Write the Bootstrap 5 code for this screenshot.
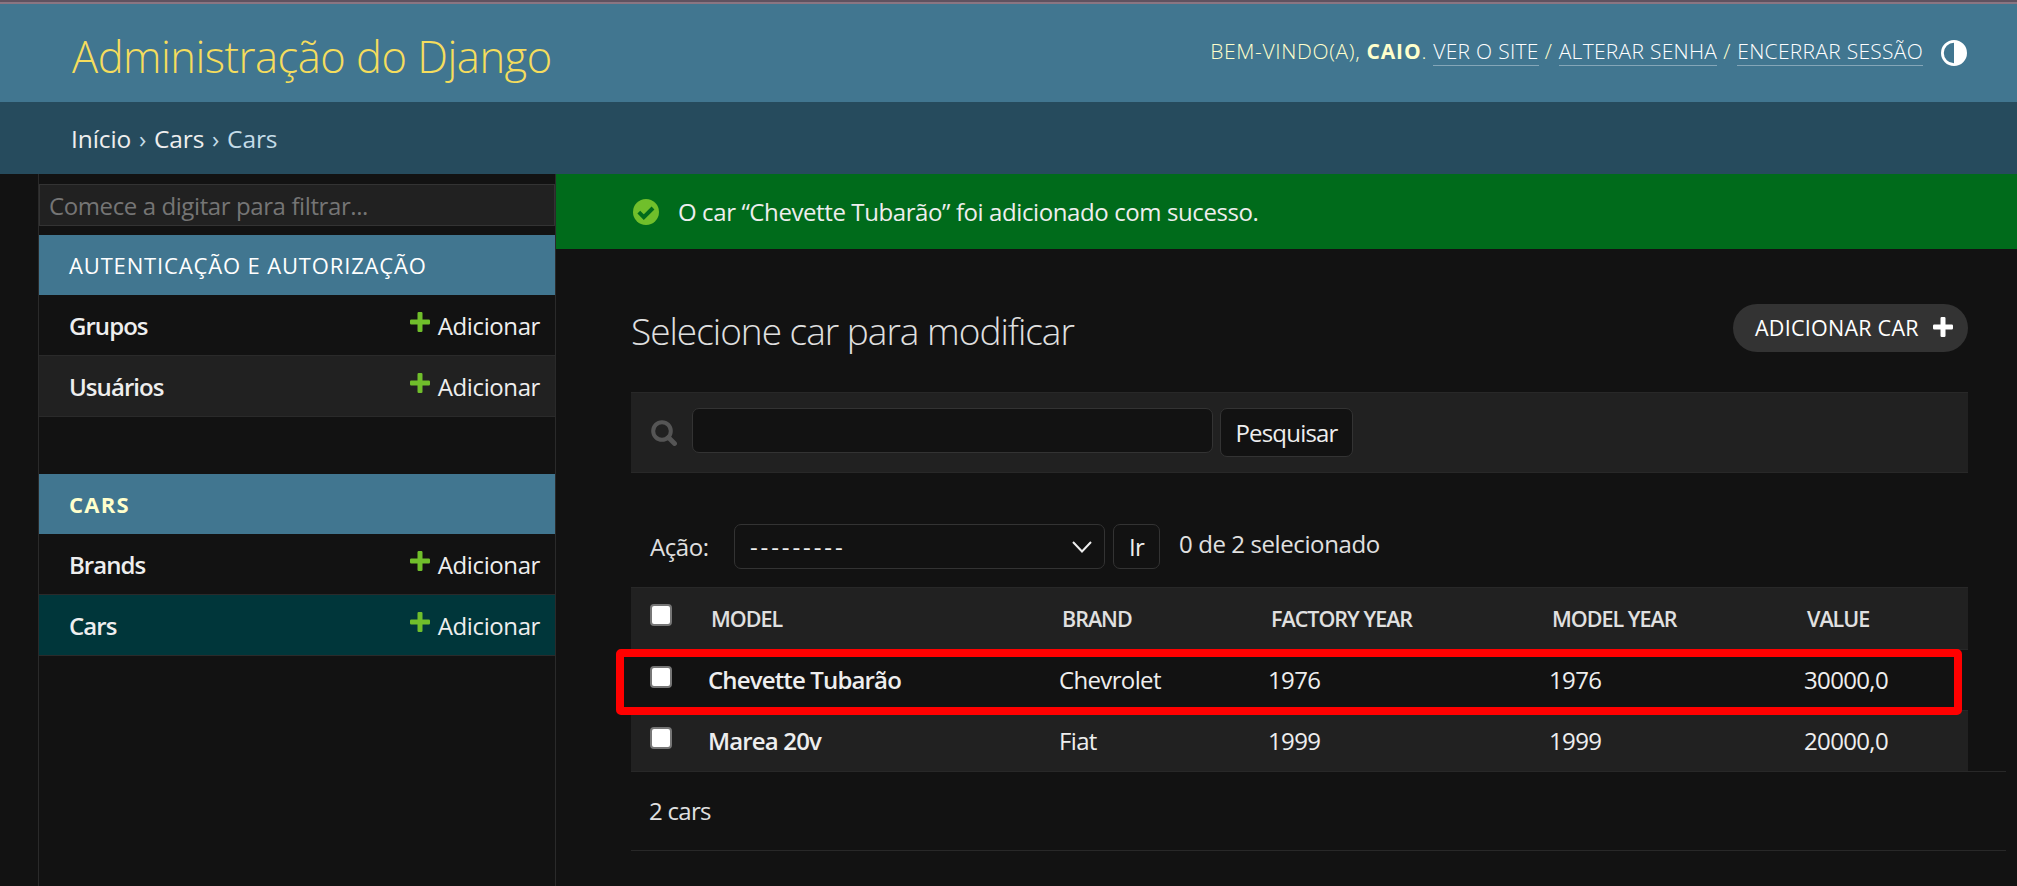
<!DOCTYPE html>
<html lang="pt-br">
<head>
<meta charset="utf-8">
<title>Selecione car para modificar | Administração do Django</title>
<link href="https://cdn.jsdelivr.net/npm/bootstrap@5.3.0/dist/css/bootstrap.min.css" rel="stylesheet">
<style>
html, body { height: 100%; overflow: hidden; }
body { font-family: "Open Sans", "Noto Sans", sans-serif; font-size: 24px; line-height: 32px; background: #121212; color: #e0e0e0; letter-spacing: -.4px; }
a { color: #eee; text-decoration: none; }
.top-edge { height: 4px; background: #5f5260; border-bottom: 2px solid #8a7582; }
.site-header { height: 98px; padding: 0 50px 0 71px; background: #417690; color: #ffc; }
.site-title { font-size: 43.5px; font-weight: 300; line-height: 60px; color: #f5dd5d; letter-spacing: -.5px; margin: 7px 0 0 1px; }
.user-tools { font-size: 21px; font-weight: 300; letter-spacing: .65px; line-height: 28px; }
.user-tools > div { margin-top: -3px; }
.user-tools strong { font-weight: 700; letter-spacing: .9px; }
.user-tools a { color: #fff; border-bottom: 1px solid #84a6b8; display: inline-block; line-height: 27px; letter-spacing: .28px; }
.user-tools svg { margin-left: 18px; }
.crumbs { height: 72px; padding: 2px 71px 0; background: #264b5d; color: #c4dce8; font-size: 24.5px; letter-spacing: -.1px; word-spacing: 1.5px; }
.side { width: 518px; margin-left: 38px; border: solid #2a2a2a; border-width: 0 1px; flex: none; }
.filter-box { height: 42px; margin: 10px 0 9px; padding: 0 9px; background: #212121; border: 1px solid #333; border-radius: 0; color: #eee; font-size: 24px; letter-spacing: -.4px; }
.filter-box::placeholder { color: #757575; opacity: 1; }
.app-caption { height: 60px; padding: 0 30px; background: #417690; color: #fff; font-size: 22px; letter-spacing: .85px; }
.app-caption.current { color: #ffc; font-weight: 700; letter-spacing: 1.3px; margin-top: 57px; }
.app-row { height: 61px; padding: 2px 15px 0 30px; border-bottom: 1px solid #2a2a2a; }
.app-row .name { font-weight: 600; letter-spacing: -.95px; }
.app-row svg { margin: -8px 8px 0 0; }
.app-row.odd { background: #212121; }
.app-row.active-row { background: #00363a; }
.success-note { height: 75px; padding: 0 75px 0 77px; background: #006b1b; color: #eee; }
.success-note svg { margin-right: 19px; }
.main-pad { padding: 0 11px 0 75px; }
.body-col { width: 1337px; }
.title-row { height: 143px; padding-top: 15px; }
.page-title { font-size: 37px; font-weight: 300; line-height: 50px; letter-spacing: -1px; margin: 6px 0 0; }
.add-pill { width: 235px; height: 48px; background: #333; border-radius: 27px; color: #fff; font-size: 21.5px; letter-spacing: .25px; padding: 0 15px 0 22px; }
.add-pill svg { margin-top: -2px; }
.search-bar { height: 81px; background: #212121; border: solid #282828; border-width: 1px 0; padding: 15px 20px; }
.dark-field { height: 45px; background: #121212; border: 1px solid #333; border-radius: 7px; color: #eee; }
.go-btn { height: 49px; background: #121212; border: 1px solid #333; border-radius: 7px; color: #eee; font-size: 24px; line-height: 32px; letter-spacing: -.8px; padding: 0; text-align: center; }
.mag { margin: 12px 15px 0 0; }
.query { width: 521px; }
.find { width: 133px; margin-left: 7px; }
.actions-bar { height: 45px; margin-top: 51px; padding-left: 19px; }
.action-label { width: 84px; padding-top: 7px; }
.pick { width: 371px; padding: 0 12px 0 15px; }
.pick span { letter-spacing: 2.9px; }
.go { width: 47px; height: 45px; margin-left: 8px; padding-top: 1px; }
.counter { margin-left: 19px; padding-top: 4px; }
.list-grid { border-collapse: separate; border-spacing: 0; table-layout: fixed; width: 1337px; margin-top: 18px; }
.list-grid td, .list-grid th { padding: 0 0 0 14px; vertical-align: middle; height: 61px; border-top: 1px solid #282828; }
.list-grid th { height: 62px; padding-left: 17px; font-size: 21.5px; font-weight: 600; letter-spacing: -1px; }
.list-grid thead tr, .list-grid .odd { background: #212121; }
.list-grid td { color: #eee; letter-spacing: -.65px; }
.list-grid td.fw-semibold { letter-spacing: -.85px; }
.col-tick { width: 63px; }
.col-model { width: 351px; }
.col-brand { width: 209px; }
.col-factory { width: 281px; }
.col-year { width: 255px; }
.tick { display: block; width: 22px; height: 22px; margin: -7px 0 0 19px; background: #fff; border: 2px solid #767676; border-radius: 4px; appearance: none; }
.paginator-line { height: 80px; border: solid #282828; border-width: 1px 0; padding: 0 0 0 18px; letter-spacing: -.7px; }
.focus-frame { position: absolute; left: -15px; top: 62px; width: 1346px; height: 66px; border: 8px solid #f00; border-radius: 5px; }
</style>
</head>
<body class="d-flex flex-column">
<svg class="d-none">
  <symbol id="plus" viewBox="0 0 20 20"><path d="M7.500 1.200Q7.500 0 8.700 0h2.600q1.200 0 1.200 1.200V7.500h6.300q1.200 0 1.200 1.200v2.600q0 1.200-1.200 1.200h-6.300v6.300q0 1.200-1.200 1.200H8.700q-1.200 0-1.200-1.200v-6.300H1.200Q0 12.500 0 11.300V8.700q0-1.200 1.200-1.200h6.300z"/></symbol>
</svg>
<div class="top-edge flex-shrink-0"></div>
<header class="site-header d-flex align-items-center justify-content-between flex-shrink-0">
  <h1 class="site-title">Administração do Django</h1>
  <div class="user-tools d-flex align-items-center">
    <div>BEM-VINDO(A), <strong>CAIO</strong>. <a href="#">VER O SITE</a> / <a href="#">ALTERAR SENHA</a> / <a href="#">ENCERRAR SESSÃO</a></div>
    <svg width="26" height="26" viewBox="0 0 26 26"><circle cx="13" cy="13" r="11.600" fill="none" stroke="#fff" stroke-width="2.800"/><path d="M13 1a12 12 0 0 1 0 24z" fill="#fff"/></svg>
  </div>
</header>
<nav class="crumbs d-flex align-items-center flex-shrink-0"><div><a href="#">Início</a> › <a href="#">Cars</a> › Cars</div></nav>

<div class="d-flex flex-grow-1 overflow-hidden">
  <aside class="side">
    <input class="filter-box w-100 d-block" placeholder="Comece a digitar para filtrar...">
    <div class="app-caption d-flex align-items-center">AUTENTICAÇÃO E AUTORIZAÇÃO</div>
    <div class="app-row d-flex align-items-center"><a class="name me-auto" href="#">Grupos</a><svg width="20" height="20" fill="#70bf2b"><use href="#plus"/></svg><a href="#">Adicionar</a></div>
    <div class="app-row odd d-flex align-items-center"><a class="name me-auto" href="#">Usuários</a><svg width="20" height="20" fill="#70bf2b"><use href="#plus"/></svg><a href="#">Adicionar</a></div>
    <div class="app-caption current d-flex align-items-center">CARS</div>
    <div class="app-row d-flex align-items-center"><a class="name me-auto" href="#">Brands</a><svg width="20" height="20" fill="#70bf2b"><use href="#plus"/></svg><a href="#">Adicionar</a></div>
    <div class="app-row active-row d-flex align-items-center"><a class="name me-auto" href="#">Cars</a><svg width="20" height="20" fill="#70bf2b"><use href="#plus"/></svg><a href="#">Adicionar</a></div>
  </aside>

  <main class="flex-grow-1">
    <div class="success-note d-flex align-items-center">
      <svg width="26" height="26" viewBox="0 0 26 26"><circle cx="13" cy="13" r="13" fill="#70bf2b"/><path d="M5.800 13.200l5 5L20 9" fill="none" stroke="#006b1b" stroke-width="4"/></svg>
      <span>O car “Chevette Tubarão” foi adicionado com sucesso.</span>
    </div>
    <div class="main-pad">
      <div class="body-col">
        <div class="title-row d-flex align-items-center justify-content-between">
          <h2 class="page-title">Selecione car para modificar</h2>
          <a href="#" class="add-pill d-flex align-items-center justify-content-between"><span>ADICIONAR CAR</span><svg width="20" height="20" fill="#fff"><use href="#plus"/></svg></a>
        </div>
        <form class="search-bar d-flex align-items-start">
          <svg width="26" height="26" viewBox="0 0 26 26" fill="none" stroke="#555" class="mag"><circle cx="11" cy="11" r="8.800" stroke-width="4"/><path d="M17.500 17.500l6 6" stroke-width="4.800" stroke-linecap="round"/></svg>
          <input class="dark-field query">
          <button type="button" class="go-btn find">Pesquisar</button>
        </form>
        <div class="actions-bar d-flex">
          <label class="action-label">Ação:</label>
          <div class="dark-field pick d-flex align-items-center justify-content-between"><span>---------</span><svg width="20" height="12" viewBox="0 0 20 12" fill="none" stroke="#eee" stroke-width="2"><path d="M1 1l9 9.500L19 1"/></svg></div>
          <button type="button" class="go-btn go">Ir</button>
          <span class="counter">0 de 2 selecionado</span>
        </div>
        <div class="position-relative">
          <table class="list-grid">
            <colgroup><col class="col-tick"><col class="col-model"><col class="col-brand"><col class="col-factory"><col class="col-year"><col></colgroup>
            <thead><tr><th class="ps-0"><input type="checkbox" class="tick"></th><th>MODEL</th><th>BRAND</th><th>FACTORY YEAR</th><th>MODEL YEAR</th><th>VALUE</th></tr></thead>
            <tbody>
              <tr><td class="ps-0"><input type="checkbox" class="tick"></td><td class="fw-semibold">Chevette Tubarão</td><td>Chevrolet</td><td>1976</td><td>1976</td><td>30000,0</td></tr>
              <tr class="odd"><td class="ps-0"><input type="checkbox" class="tick"></td><td class="fw-semibold">Marea 20v</td><td>Fiat</td><td>1999</td><td>1999</td><td>20000,0</td></tr>
            </tbody>
          </table>
          <div class="focus-frame"></div>
        </div>
      </div>
      <div class="paginator-line d-flex align-items-center">2 cars</div>
    </div>
  </main>
</div>
<script src="https://cdn.jsdelivr.net/npm/bootstrap@5.3.0/dist/js/bootstrap.bundle.min.js"></script>
</body>
</html>
